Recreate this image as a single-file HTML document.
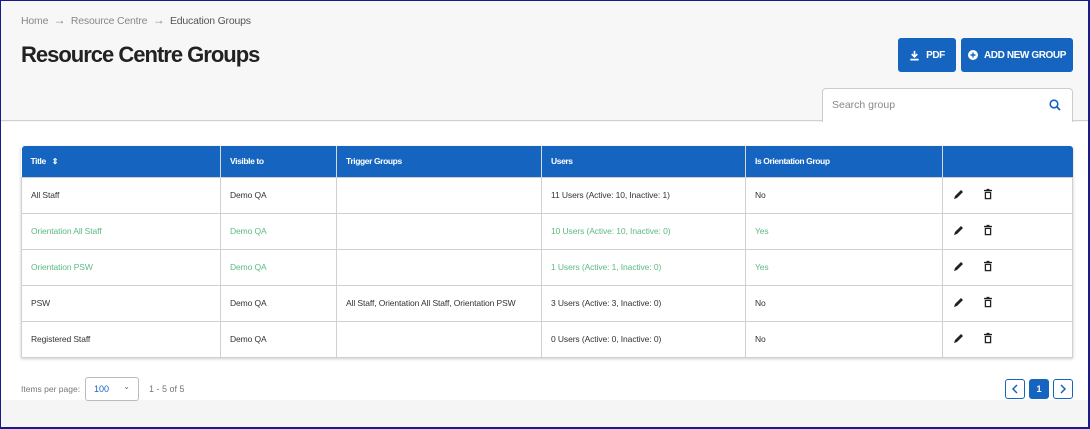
<!DOCTYPE html>
<html><head><style>
*{box-sizing:border-box;margin:0;padding:0}
body{width:1090px;height:429px;overflow:hidden;font-family:"Liberation Sans",sans-serif;background:#f5f5f5;position:relative}
.frame{position:absolute;left:0;top:0;width:1090px;height:429px;border:1px solid #1a1a8c;border-right:2px solid #1a1a8c;border-bottom:2px solid #1a1a8c;z-index:10;pointer-events:none}
.top{position:absolute;left:0;top:0;width:1090px;height:121px;background:#f7f7f7;border-bottom:1px solid #d0d0d0}
.mid{position:absolute;left:0;top:122px;width:1090px;height:278px;background:#fff}
.bc{position:absolute;left:21px;top:13px;font-size:10.5px;color:#888;letter-spacing:-0.2px}
.bc span.cur{color:#555}
.bc b{font-weight:normal;font-size:12px;color:#888}
h1{position:absolute;left:21px;top:42px;font-size:22px;font-weight:bold;color:#222;letter-spacing:-1px}
.btn{position:absolute;top:38px;height:34px;background:#1565c0;border-radius:3px;color:#fff;font-size:10px;font-weight:bold;display:flex;align-items:center;justify-content:center;gap:6px;letter-spacing:-0.4px}
.search{position:absolute;left:822px;top:88px;width:251px;height:34px;background:#fff;border:1px solid #ccc;border-bottom:none;border-radius:4px 4px 0 0;font-size:10.5px;color:#888;padding:10px 9px}
table{position:absolute;left:21px;top:146px;width:1052px;border-collapse:collapse;font-size:8.5px;box-shadow:0 1px 3px rgba(0,0,0,.2)}
th{background:#1565c0;color:#fff;text-align:left;font-weight:bold;height:31px;padding-left:9px;border-left:1px solid #d8d8d8;letter-spacing:-0.4px}
th:first-child{border-left:none;border-radius:3px 0 0 0}
th:last-child{border-radius:0 3px 0 0}
td{height:36px;padding-left:9px;border:1px solid #d0d0d0;color:#333;letter-spacing:-0.1px}
tr.g td{color:#5cba84}
.pp{position:absolute;left:21px;top:384px;font-size:8.5px;color:#777}
.sel{position:absolute;left:85px;top:377px;width:54px;height:24px;border:1px solid #bbb;border-radius:3px;background:#fff;font-size:9px;color:#1565c0;padding:6px 8px}
.cnt{position:absolute;left:149px;top:384px;font-size:9px;color:#777}
.pg{position:absolute;top:379px;width:20px;height:20px;border:1px solid #1565c0;border-radius:3px;background:#fff;display:flex;align-items:center;justify-content:center}
</style></head><body>
<div class="top"></div><div class="mid"></div>
<div class="bc">Home &nbsp;<b>→</b>&nbsp; Resource Centre &nbsp;<b>→</b>&nbsp; <span class="cur">Education Groups</span></div>
<h1>Resource Centre Groups</h1>
<div class="btn" style="left:898px;width:58px"><svg width="11" height="11" viewBox="0 0 12 12"><path d="M6 1v6M3 4.5l3 3 3-3M1.5 10.5h9" stroke="#fff" stroke-width="1.8" fill="none"/></svg>PDF</div>
<div class="btn" style="left:961px;width:112px"><svg width="10" height="10" viewBox="0 0 10 10"><circle cx="5" cy="5" r="5" fill="#fff"/><path d="M5 2.5v5M2.5 5h5" stroke="#1565c0" stroke-width="1.4"/></svg>ADD NEW GROUP</div>
<div class="search">Search group<svg style="position:absolute;right:11px;top:10px" width="12" height="12" viewBox="0 0 12 12"><circle cx="5" cy="5" r="3.8" stroke="#1565c0" stroke-width="1.6" fill="none"/><path d="M8 8l3 3" stroke="#1565c0" stroke-width="1.8"/></svg></div>
<table>
<tr><th style="width:199px">Title &nbsp;&nbsp;<span style="font-size:8px">⇕</span></th><th style="width:116px">Visible to</th><th style="width:205px">Trigger Groups</th><th style="width:204px">Users</th><th style="width:197px">Is Orientation Group</th><th></th></tr>
<tr><td>All Staff</td><td>Demo QA</td><td></td><td>11 Users (Active: 10, Inactive: 1)</td><td>No</td><td></td></tr>
<tr class="g"><td>Orientation All Staff</td><td>Demo QA</td><td></td><td>10 Users (Active: 10, Inactive: 0)</td><td>Yes</td><td></td></tr>
<tr class="g"><td>Orientation PSW</td><td>Demo QA</td><td></td><td>1 Users (Active: 1, Inactive: 0)</td><td>Yes</td><td></td></tr>
<tr><td>PSW</td><td>Demo QA</td><td>All Staff, Orientation All Staff, Orientation PSW</td><td>3 Users (Active: 3, Inactive: 0)</td><td>No</td><td></td></tr>
<tr><td>Registered Staff</td><td>Demo QA</td><td></td><td>0 Users (Active: 0, Inactive: 0)</td><td>No</td><td></td></tr>
</table>
<svg style="position:absolute;left:0;top:0" width="1090" height="429">
<defs><g id="ed"><path d="M0 10l1-3 6-6 2 2-6 6z" fill="#222"/></g>
<g id="tr"><path d="M1 1.5h8M3.5 0.5h3" stroke="#222" stroke-width="1.2"/><rect x="2.4" y="3.4" width="5.2" height="6.2" fill="none" stroke="#222" stroke-width="1.3"/></g></defs>
<use href="#ed" x="954" y="189"/><use href="#tr" x="983" y="189"/>
<use href="#ed" x="954" y="225"/><use href="#tr" x="983" y="225"/>
<use href="#ed" x="954" y="261"/><use href="#tr" x="983" y="261"/>
<use href="#ed" x="954" y="297"/><use href="#tr" x="983" y="297"/>
<use href="#ed" x="954" y="333"/><use href="#tr" x="983" y="333"/>
</svg>
<div class="pp">Items per page:</div>
<div class="sel">100<span style="position:absolute;right:8px;top:4px;color:#666;font-size:8px">⌄</span></div>
<div class="cnt">1 - 5 of 5</div>
<div class="pg" style="left:1005px"><svg width="8" height="10"><path d="M6 1L2 5l4 4" stroke="#1565c0" stroke-width="1.5" fill="none"/></svg></div>
<div class="pg" style="left:1029px;background:#1565c0;color:#fff;font-size:9px;font-weight:bold">1</div>
<div class="pg" style="left:1053px"><svg width="8" height="10"><path d="M2 1l4 4-4 4" stroke="#1565c0" stroke-width="1.5" fill="none"/></svg></div>
<div class="frame"></div>
</body></html>
